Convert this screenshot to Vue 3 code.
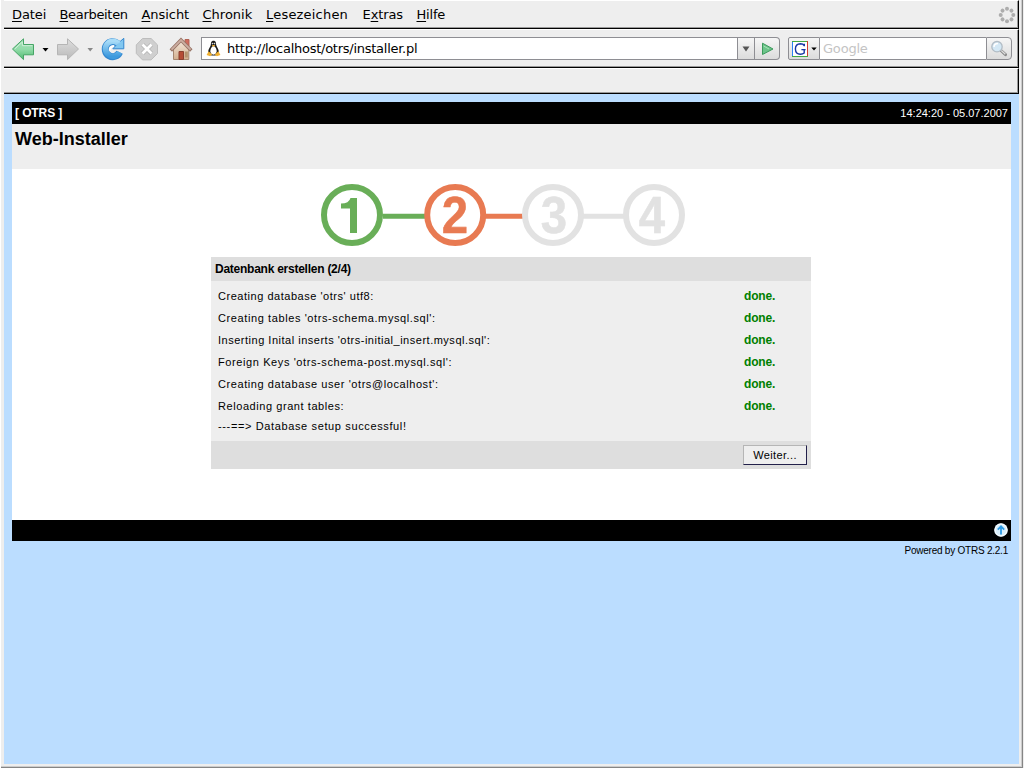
<script setup>
const menu = [
  { key: 'D', rest: 'atei', cls: 'm1' },
  { key: 'B', rest: 'earbeiten', cls: 'm2' },
  { key: 'A', rest: 'nsicht', cls: 'm3' },
  { key: 'C', rest: 'hronik', cls: 'm4' },
  { key: 'L', rest: 'esezeichen', cls: 'm5' },
  { pre: 'E', key: 'x', rest: 'tras', cls: 'm6' },
  { key: 'H', rest: 'ilfe', cls: 'm7' },
]
const rows = [
  { text: "Creating database 'otrs' utf8:", cls: 'r1' },
  { text: "Creating tables 'otrs-schema.mysql.sql':", cls: 'r2' },
  { text: "Inserting Inital inserts 'otrs-initial_insert.mysql.sql':", cls: 'r3' },
  { text: "Foreign Keys 'otrs-schema-post.mysql.sql':", cls: 'r4' },
  { text: "Creating database user 'otrs@localhost':", cls: 'r5' },
  { text: 'Reloading grant tables:', cls: 'r6' },
]
const dots = [0, 45, 90, 135, 180, 225, 270, 315]
</script>

<template>
  <div class="window">
    <div class="bar menubar">
      <span v-for="m in menu" :key="m.rest" class="menu-item" :class="m.cls">{{ m.pre }}<u>{{ m.key }}</u>{{ m.rest }}</span>
      <svg class="throbber" width="18" height="18" viewBox="-9 -9 18 18">
        <circle v-for="d in dots" :key="d" cx="0" cy="-6.3" r="2" fill="#adadad" :transform="`rotate(${d})`" />
      </svg>
    </div>

    <div class="bar toolbar">
      <svg class="tools" width="196" height="36" viewBox="4 30 196 36">
        <defs>
          <linearGradient id="gback" x1="0" y1="0" x2="0" y2="1"><stop offset="0" stop-color="#a5dfb5" /><stop offset=".5" stop-color="#93dcaa" /><stop offset="1" stop-color="#4fba70" /></linearGradient>
          <linearGradient id="gfwd" x1="0" y1="0" x2="0" y2="1"><stop offset="0" stop-color="#dedede" /><stop offset="1" stop-color="#b9b9b9" /></linearGradient>
          <linearGradient id="gblue" x1="0" y1="0" x2="0" y2="1"><stop offset="0" stop-color="#a8dcf8" /><stop offset="1" stop-color="#3d9ade" /></linearGradient>
          <linearGradient id="ghouse" x1="0" y1="0" x2="0" y2="1"><stop offset="0" stop-color="#f4e8dc" /><stop offset="1" stop-color="#d3b08f" /></linearGradient>
        </defs>
        <path d="M12.5 48 L23.5 37.8 V43.5 H33.5 V53.8 H23.5 V58.6 Z" fill="url(#gback)" stroke="#46a566" />
        <path d="M14.8 48 L22.4 41 V44.7 H32.3" fill="none" stroke="#cdeed8" />
        <path d="M42.5 47 h6 l-3 3.5z" fill="#000" />
        <path d="M78.5 48 L67.5 37.8 V43.5 H57.5 V53.8 H67.5 V58.6 Z" fill="url(#gfwd)" stroke="#b5b5b5" />
        <path d="M87.5 47 h5.5 l-2.8 3.5z" fill="#888" />
        <path d="M119.6 51.2 A7.5 7.5 0 1 1 117.8 42.6" fill="none" stroke="#3387cf" stroke-width="7" />
        <path d="M123.8 37.3 V47.8 H112.8 L116.5 43.8 L119.5 41 Z" fill="#81c7f0" stroke="#3387cf" />
        <path d="M119.6 51.2 A7.5 7.5 0 1 1 118.6 42.8" fill="none" stroke="url(#gblue)" stroke-width="5.4" />
        <path d="M109.6 49.5 q.4-4.3 4.4-4.5" fill="none" stroke="#fff" stroke-width="1.8" />
        <path d="M142.5 37.5 h8.6 l6.4 6.4 v8.6 l-6.4 6.4 h-8.6 l-6.2-6.4 v-8.6z" fill="#cfcfcf" stroke="#bdbdbd" />
        <path d="M142.5 43.5 l9 9 m0-9 l-9 9" stroke="#b5b5b5" stroke-width="4.4" />
        <path d="M142.5 43.5 l9 9 m0-9 l-9 9" stroke="#fff" stroke-width="2.8" />
        <path d="M185 38.5 h4 v7 h-4z" fill="#cf6b5e" stroke="#b26455" />
        <path d="M173.5 47 L181 39.5 L188.8 47 V58.5 H173.5z" fill="url(#ghouse)" stroke="#a5866f" />
        <path d="M170.8 49.5 L181 39 L191.3 49.5" fill="none" stroke="#987466" stroke-width="3.4" />
        <path d="M171.5 48.7 L181 39 L190.6 48.7" fill="none" stroke="#ccaea2" stroke-width="1.8" />
        <path d="M179 50.5 h4.5 v8 h-4.5z" fill="#b54c35" stroke="#8a4130" />
        <path d="M184.8 50.5 h3 v6 h-3z" fill="#b5946f" />
      </svg>
      <div class="url">
        <svg width="15" height="17" viewBox="0 0 15 17">
          <path d="M7.5 .8 C10 .8 10 3 10.2 5 C10.6 7 13 9 12.8 12 C12 15 10 15.5 7.5 15.5 C5 15.5 3 15 2.2 12 C2 9 4.4 7 4.8 5 C5 3 5 .8 7.5 .8z" fill="#1a1a1a" />
          <path d="M7.5 6 C9.5 6.5 11 9.5 10.6 12 Q9.8 14.8 7.5 14.8 Q5.2 14.8 4.4 12 C4 9.5 5.5 6.5 7.5 6z" fill="#fff" />
          <circle cx="6.5" cy="3.6" r=".8" fill="#ddd" /><circle cx="8.5" cy="3.6" r=".8" fill="#ddd" />
          <path d="M5.7 5h3.6l-1.8 2z" fill="#f0b030" />
          <path d="M2.6 11.2 l3.6 3.3 -2 1.7 -3.6-1.2z M12.4 11.2 l-3.6 3.3 2 1.7 3.6-1.2z" fill="#f0b030" />
        </svg>
        <span>http://localhost/otrs/installer.pl</span>
      </div>
      <div class="drop"><svg width="8" height="6"><path d="M.5 .5 h7 l-3.5 5z" fill="#555" /></svg></div>
      <div class="go">
        <svg width="14" height="14" viewBox="0 0 14 14"><path d="M2.5 1.2 L13 7 L2.5 12.5z" fill="#6cc48a" stroke="#3c9a5c" /><path d="M3.6 4 L9 7" stroke="#a6e3b6" /></svg>
      </div>
      <div class="engine">
        <svg width="16" height="16" viewBox="0 0 16 16">
          <path d="M0 0h16v16H0z" fill="#fff" />
          <path d="M.5 0v16" stroke="#2a82f4" /><path d="M0 .5h16" stroke="#43a843" /><path d="M15.5 0v16" stroke="#d33b2f" /><path d="M0 15.5h16" stroke="#43a843" />
          <path d="M12.3 5.2 V2.8 M12.2 4.6 Q11 2.8 8.5 2.8 Q3.4 3 3.4 8 Q3.6 13.2 8.4 13.2 Q10.8 13.2 12.2 12 V8.8 M9.4 8.6 h4.2" fill="none" stroke="#1735a5" stroke-width="1.4" />
        </svg>
        <svg width="6" height="4"><path d="M.3 .5 h5.4 l-2.7 3z" fill="#000" /></svg>
      </div>
      <div class="search">Google</div>
      <div class="find">
        <svg width="18" height="18" viewBox="0 0 18 18"><path d="M11 10.5 L15.5 14.7" stroke="#888" stroke-width="3" stroke-linecap="round" /><path d="M11.3 10.6 L15.3 14.3" stroke="#ddd" stroke-width="1.3" /><circle cx="7" cy="6.7" r="5.2" fill="#d4e8f5" stroke="#b2bcc5" stroke-width="1.3" /><path d="M4 7 q0-3.5 4-3.5" stroke="#fff" stroke-width="1.5" fill="none" /></svg>
      </div>
    </div>

    <div class="bar bookmarks"></div>

    <main class="page">
      <div class="topline"><b class="t-otrs">[ OTRS ]</b><span class="t-date">14:24:20 - 05.07.2007</span></div>
      <div class="heading"><b>Web-Installer</b></div>
      <div class="content">
        <svg class="steps" width="366" height="64" viewBox="320 183 366 64">
          <g fill="none" stroke-width="6">
            <path d="M383 216.3H425" stroke="#69ae58" stroke-width="5" />
            <path d="M485 216.3H523" stroke="#e87a52" stroke-width="5" />
            <path d="M583 216.3H625" stroke="#e2e2e2" stroke-width="5" />
            <circle cx="352" cy="215" r="28" stroke="#69ae58" />
            <circle cx="455.2" cy="215" r="28" stroke="#e87a52" />
            <circle cx="553" cy="215" r="28" stroke="#e2e2e2" />
            <circle cx="654" cy="215" r="28" stroke="#e2e2e2" />
          </g>
          <path d="M357 198 V233 H350 V208.5 H341 V203.5 Q349 203.5 350.5 198Z" fill="#69ae58" />
          <g class="num">
            <text transform="translate(455 233) scale(.92 1)" fill="#e87a52" stroke="#e87a52">2</text>
            <text transform="translate(554 232.5) scale(.92 1)" fill="#e2e2e2" stroke="#e2e2e2">3</text>
            <text transform="translate(652 233) scale(.92 1)" fill="#e2e2e2" stroke="#e2e2e2">4</text>
          </g>
        </svg>
        <section class="panel">
          <div class="panel-head"><b>Datenbank erstellen (2/4)</b></div>
          <div class="panel-body">
            <div v-for="r in rows" :key="r.cls" class="row"><span :class="r.cls">{{ r.text }}</span><b>done.</b></div>
            <div class="row last"><span class="r7">---==&gt; Database setup successful!</span></div>
          </div>
          <div class="panel-foot"><button>Weiter...</button></div>
        </section>
      </div>
      <div class="bottomline">
        <svg width="14" height="14" viewBox="0 0 14 14"><circle cx="7" cy="7" r="6.8" fill="#d9effc" /><circle cx="7" cy="7" r="6" fill="none" stroke="#fff" /><path d="M7 11.5V3.5M3.8 6.6L7 3.3l3.2 3.3" fill="none" stroke="#2d9be6" stroke-width="1.8" /></svg>
      </div>
      <div class="powered"><span>Powered by OTRS 2.2.1</span></div>
    </main>
  </div>
</template>

<style>
body { margin: 0; overflow: hidden; }
</style>

<style scoped>
* { box-sizing: border-box; }
svg { display: block; flex: none; }
.window { width: 1024px; height: 768px; background: #eee; padding: 0 5px 4px 3px; display: flex; flex-direction: column; position: relative; font-family: "Liberation Sans", Arial, sans-serif; color: #000; overflow: hidden; border-left: 1px solid #fff; }
.window::after { content: ""; position: absolute; inset: 0 1px 0 0; border-right: 1px solid #858585; border-bottom: 1px solid #858585; box-shadow: inset -1px -1px #ccc; pointer-events: none; }
.bar { flex: none; background: #eee; border-top: 1px solid #fff; border-bottom: 1px solid #000; border-right: 1px solid #000; box-shadow: inset -1px -1px #999; display: flex; align-items: center; }
.menubar { height: 29px; font: 13px "DejaVu Sans", sans-serif; padding-left: 8px; }
.toolbar { height: 39px; }
.bookmarks { height: 26px; }
.menu-item { white-space: nowrap; line-height: 20px; flex: none; }
.menu-item u { text-underline-offset: 2px; text-decoration-thickness: 1px; text-decoration-skip-ink: none; }
.m1 { width: 47.5px; letter-spacing: -.1px; }
.m2 { width: 82px; letter-spacing: -.32px; }
.m3 { width: 61px; letter-spacing: -.05px; }
.m4 { width: 63.5px; }
.m5 { width: 96.5px; letter-spacing: .2px; }
.m6 { width: 54px; letter-spacing: -.1px; }
.m7 { letter-spacing: -.2px; }
.throbber { margin-left: auto; margin-right: 2px; }
.tools { margin-right: 1px; }
.url { width: 537px; height: 23px; border: 1px solid #8e8e93; background: #fff; display: flex; align-items: center; padding-left: 4px; font: 13px "DejaVu Sans", sans-serif; letter-spacing: -.26px; }
.url span { margin-left: 6px; }
.drop, .go, .engine, .find { height: 23px; border: 1px solid #8e8e93; background: linear-gradient(#f6f6f6, #dcdcdc); display: flex; align-items: center; justify-content: center; }
.drop { width: 17px; border-left: 0; }
.go { width: 25px; border-left: 0; border-radius: 0 4px 4px 0; }
.engine { width: 32px; margin-left: 8px; border-radius: 2px 0 0 2px; gap: 3px; }
.search { width: 166px; height: 23px; border: 1px solid #8e8e93; border-width: 1px 0; background: #fff; font: 13px/21px "DejaVu Sans", sans-serif; color: #c4c4c4; padding-left: 3px; letter-spacing: -.2px; }
.find { width: 26px; border-radius: 0 4px 4px 0; }
.page { flex: 1; background: #bdf; padding: 8px 8px 0; display: flex; flex-direction: column; }
.topline { height: 22px; background: #000; color: #fff; display: flex; justify-content: space-between; align-items: center; padding: 0 3px; font-size: 12px; }
.t-otrs { letter-spacing: -.1px; }
.t-date { font-size: 11px; }
.heading { height: 45px; background: #eee; font-size: 18px; padding: 4px 3px; line-height: 22px; }
.content { height: 351px; background: #fff; padding-top: 14px; }
.steps { margin-left: 308px; }
.num { font: bold 51.5px "Liberation Sans", Arial, sans-serif; text-anchor: middle; stroke-width: .5px; }
.panel { width: 600px; margin: 10px 0 0 199px; font-size: 11px; white-space: nowrap; }
.panel-head { height: 24px; background: #dedede; padding-left: 4px; line-height: 24px; font-size: 12px; letter-spacing: -.25px; }
.panel-body { height: 160px; background: #eee; padding: 4px 7px 0; }
.row { height: 22px; line-height: 22px; display: flex; }
.row span { width: 526px; }
.r1 { letter-spacing: .53px; }
.r2 { letter-spacing: .6px; }
.r3 { letter-spacing: .51px; }
.r4 { letter-spacing: .6px; }
.r5 { letter-spacing: .575px; }
.r6 { letter-spacing: .565px; }
.r7 { letter-spacing: .63px; }
.row b { color: #008000; font-size: 12px; letter-spacing: -.15px; }
.last { margin-top: -2px; }
.panel-foot { height: 28px; background: #dedede; padding: 4px; display: flex; justify-content: flex-end; }
button { width: 64px; height: 20px; background: #eee; border: 1px solid; border-color: #b5b5b5 #22204a #22204a #b5b5b5; padding: 0; border-radius: 0; font: 11px "Liberation Sans", Arial, sans-serif; letter-spacing: .4px; color: #000; }
.bottomline { height: 21px; background: #000; display: flex; justify-content: flex-end; padding: 3px 3px 0; }
.powered { text-align: right; font-size: 10px; line-height: 19px; padding-right: 3px; letter-spacing: -.23px; }
</style>
